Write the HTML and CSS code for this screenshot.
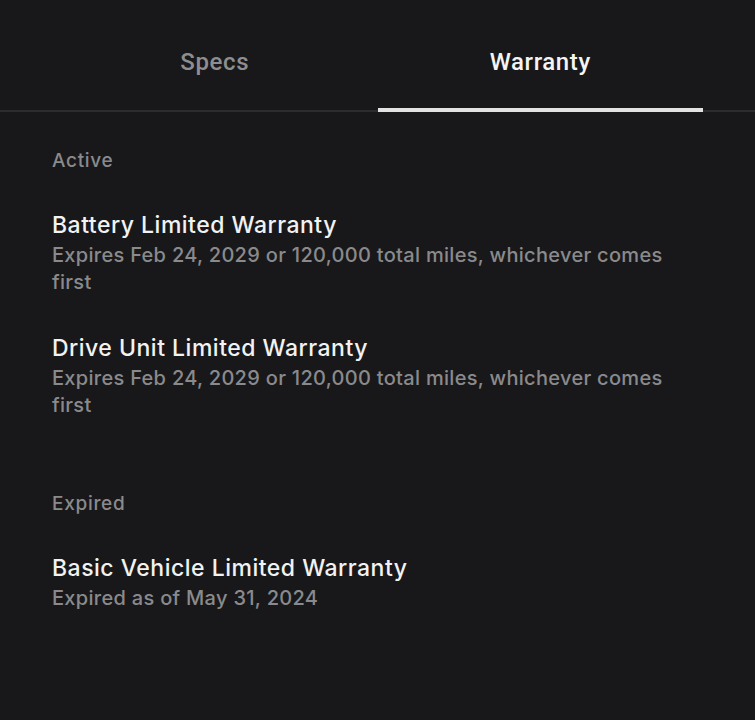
FILE: index.html
```html
<!DOCTYPE html>
<html lang="en">
<head>
    <meta charset="UTF-8">
    <meta name="viewport" content="width=device-width, initial-scale=1.0">
    <title>Warranty</title>
    <link rel="stylesheet" href="styles.css">
</head>
<body>
    <div class="tabs">
        <div class="tab">Specs</div>
        <div class="tab active">Warranty</div>
    </div>

    <div class="content">
        <div class="section">
            <div class="section-label">Active</div>
            <div class="item">
                <div class="item-title">Battery Limited Warranty</div>
                <div class="item-sub">Expires Feb 24, 2029 or 120,000 total miles, whichever comes first</div>
            </div>
            <div class="item">
                <div class="item-title">Drive Unit Limited Warranty</div>
                <div class="item-sub">Expires Feb 24, 2029 or 120,000 total miles, whichever comes first</div>
            </div>
        </div>

        <div class="section expired">
            <div class="section-label">Expired</div>
            <div class="item">
                <div class="item-title">Basic Vehicle Limited Warranty</div>
                <div class="item-sub">Expired as of May 31, 2024</div>
            </div>
        </div>
    </div>
</body>
</html>
```

FILE: styles.css
```css
* {
    margin: 0;
    padding: 0;
    box-sizing: border-box;
}

body {
    background: #18181a;
    font-family: Inter, "Noto Sans", Arial, sans-serif;
    min-height: 100vh;
    overflow: hidden;
}

.tabs {
    display: flex;
    padding: 0 52px;
    border-bottom: 2px solid #2c2c2e;
}

.tab {
    flex: 1;
    height: 112px;
    padding-top: 48px;
    text-align: center;
    font-family: Roboto, Arial, sans-serif;
    font-size: 24px;
    font-weight: 500;
    letter-spacing: 0.6px;
    color: #8e8e90;
    border-bottom: 4px solid transparent;
    margin-bottom: -2px;
}

.tab.active {
    color: #f4f4f4;
    border-bottom-color: #e2e2e2;
}

.content {
    padding: 37px 52px 0;
}

.section-label {
    font-size: 19px;
    font-weight: 500;
    letter-spacing: 0.7px;
    color: #8a8a8c;
    margin-bottom: 37px;
}

.item {
    margin-bottom: 36px;
    max-width: 651px;
}

.item-title {
    font-size: 23px;
    font-weight: 500;
    letter-spacing: 0.5px;
    color: #f2f2f2;
    line-height: 33px;
}

.item-sub {
    font-size: 20px;
    font-weight: 500;
    letter-spacing: 0.3px;
    color: #8a8a8c;
    line-height: 27px;
}

.section.expired {
    padding-top: 37px;
}
```
